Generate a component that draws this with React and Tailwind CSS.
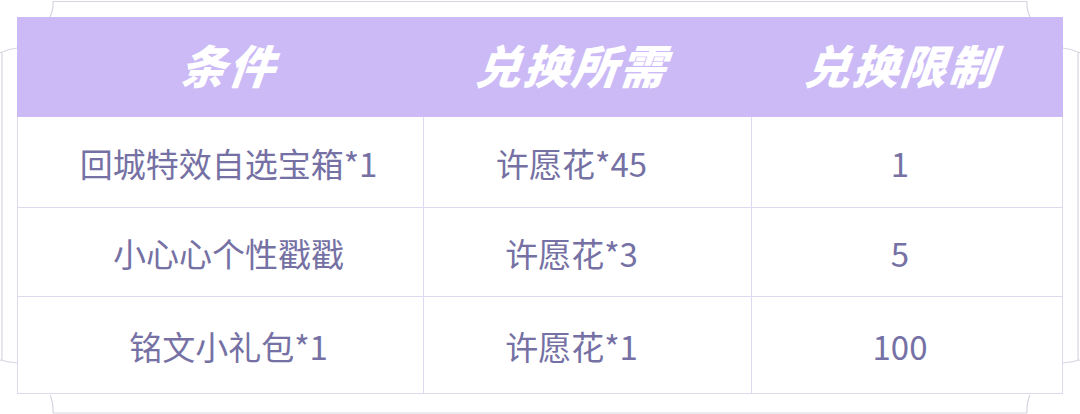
import React from 'react';

const rows = [
  { item: '回城特效自选宝箱*1', cost: '许愿花*45', limit: '1', h: 'h-[91px]' },
  { item: '小心心个性戳戳', cost: '许愿花*3', limit: '5', h: 'h-[89px]' },
  { item: '铭文小礼包*1', cost: '许愿花*1', limit: '100', h: 'h-[97px]' },
];

const headers = ['条件', '兑换所需', '兑换限制'];
// content sits a little off each column's centre in the reference
const shift = ['pl-[16px]', 'pr-[32px]', 'pr-[14px]'];

// thin outer frame with notched corners
const Frame = () => (
  <svg className="absolute inset-0 pointer-events-none" width="1080" height="414" fill="none" stroke="#d6d5e0" strokeWidth="1.2">
    <path d="M53 1.5H1027" />
    <path d="M50 17Q53.5 10 53 1.5" />
    <path d="M1030 17Q1026.5 10 1027 1.5" />
    <path d="M0 53Q8 49 17 48" />
    <path d="M2 53V360" />
    <path d="M0 360Q8 362 17 363" />
    <path d="M1080 53Q1072 49 1063 48" />
    <path d="M1078 53V360" />
    <path d="M1080 360Q1072 362 1063 363" />
    <path d="M53 413H1027" />
    <path d="M50 395Q53.5 403 53 413" />
    <path d="M1030 395Q1026.5 403 1027 413" />
  </svg>
);

export default function App() {
  return (
    <div className="relative w-[1080px] h-[414px] bg-white overflow-hidden pt-[17px] pl-[17px]">
      <Frame />
      <div className="relative w-[1046px] grid grid-cols-[407px_328px_311px] font-['Noto_Sans_CJK_SC','Noto_Sans',sans-serif]">
        {headers.map((h, i) => (
          <div key={h} className={`h-[100px] bg-[#cbbaf6] flex items-center justify-center pb-[6px] ${shift[i]}`}>
            <span className="text-white text-[46px] font-black italic tracking-[2px] leading-none -skew-x-6">{h}</span>
          </div>
        ))}
        {rows.map((r, i) => (
          <React.Fragment key={i}>
            <div className={`${r.h} flex items-center justify-center border-l border-r border-b border-[#dddaf0] text-[33px] font-normal text-[#7571a4] pt-1 ${shift[0]}`}>
              {r.item}
            </div>
            <div className={`${r.h} flex items-center justify-center border-r border-b border-[#dddaf0] text-[33px] font-normal text-[#7571a4] pt-1 ${shift[1]}`}>
              {r.cost}
            </div>
            <div className={`${r.h} flex items-center justify-center border-r border-b border-[#dddaf0] text-[33px] font-normal text-[#7571a4] pt-1 ${shift[2]}`}>
              {r.limit}
            </div>
          </React.Fragment>
        ))}
      </div>
    </div>
  );
}
